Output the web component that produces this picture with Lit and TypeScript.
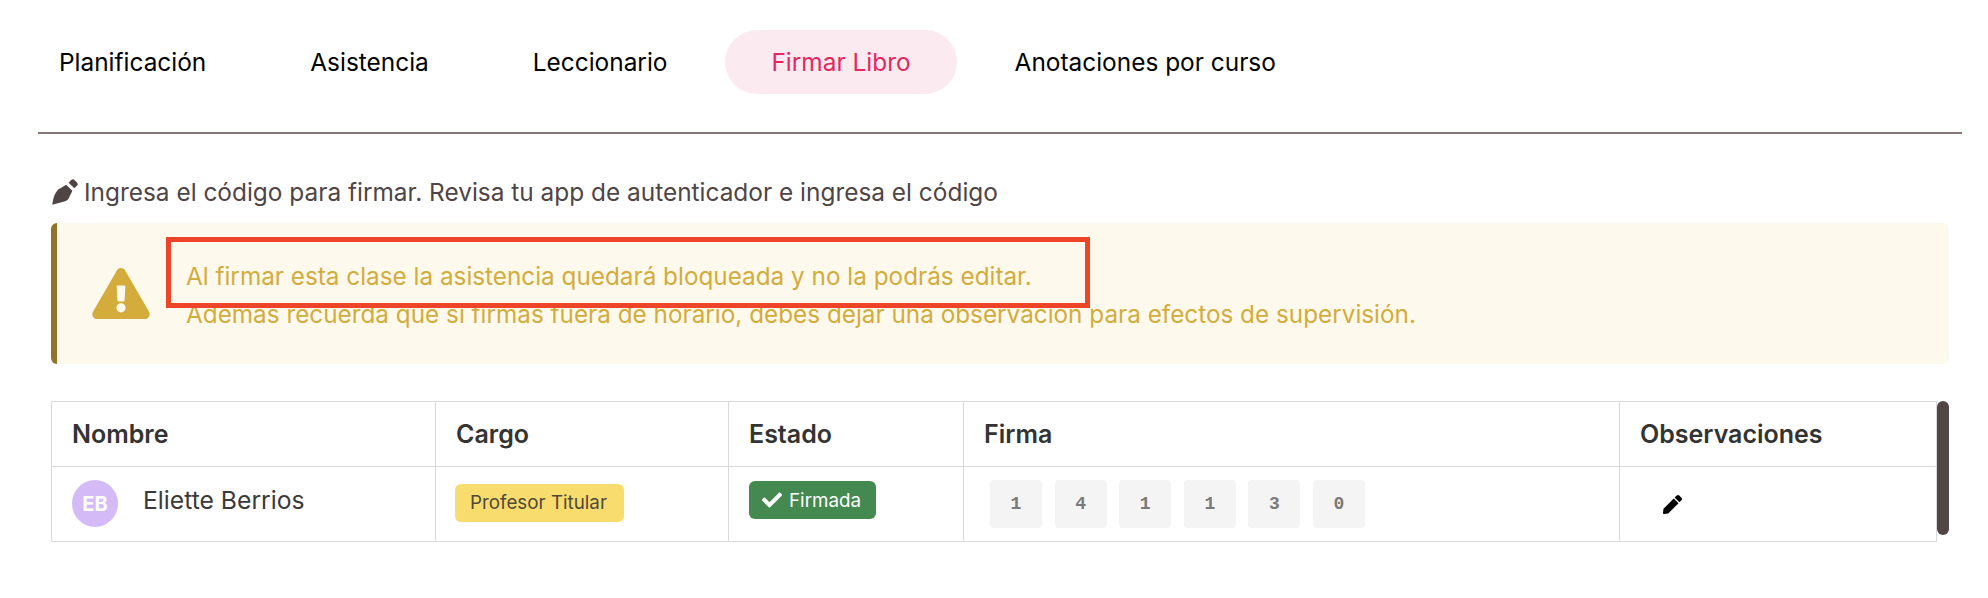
import { LitElement, html, css, svg } from 'lit';
import { customElement } from 'lit/decorators.js';

const TABS = ['Planificación', 'Asistencia', 'Leccionario', 'Firmar Libro', 'Anotaciones por curso'];
const CODE = ['1', '4', '1', '1', '3', '0'];

const penIcon = svg`<path d="M14.6 5.4 20.6 11.4 17.2 18.2C16.2 20 14.8 21 12.8 21.6L1.2 24.8C2 19 3.2 13.6 7.4 9.8Z"/><path d="M17 3.6 19.2 1.2A2.6 2.6 0 0 1 22.8 1.2L24.8 3.2A2.6 2.6 0 0 1 24.8 6.8L22.4 9Z"/>`;
const warnIcon = svg`<path d="M569.517 440.013C587.975 472.007 564.806 512 527.94 512H48.054c-36.937 0-59.999-40.055-41.577-71.987L246.423 23.985c18.467-32.009 64.72-31.951 83.154 0l239.94 416.028zM288 354c-25.405 0-46 20.595-46 46s20.595 46 46 46 46-20.595 46-46-20.595-46-46-46zm-43.673-165.346l7.418 136c.347 6.364 5.609 11.346 11.982 11.346h48.546c6.373 0 11.635-4.982 11.982-11.346l7.418-136c.375-6.874-5.098-12.654-11.982-12.654h-63.383c-6.884 0-12.356 5.78-11.981 12.654z"/>`;
const checkIcon = svg`<path d="M173.898 439.404l-166.4-166.4c-9.997-9.997-9.997-26.206 0-36.204l36.203-36.204c9.997-9.998 26.207-9.998 36.204 0L192 312.69 432.095 72.596c9.997-9.997 26.207-9.997 36.204 0l36.203 36.204c9.997 9.997 9.997 26.206 0 36.204l-294.4 294.401c-9.998 9.997-26.207 9.997-36.204-.001z"/>`;
const editIcon = svg`<path d="M290.74 93.24l128.02 128.02-277.99 277.99-114.14 12.6C11.35 513.54-1.56 500.62.14 485.34l12.7-114.22 277.9-278.88zm207.2-19.06l-60.11-60.11c-18.75-18.75-49.16-18.75-67.91 0l-56.55 56.55 128.02 128.02 56.55-56.55c18.75-18.76 18.75-49.16 0-67.91z"/>`;

@customElement('app-root')
export class AppRoot extends LitElement {
  static styles = css`
    :host {
      display: block;
      height: 598px;
      background: #fff;
      font-family: Inter, "Liberation Sans", sans-serif;
      font-size: 24.3px;
      color: #3a3a3a;
      overflow: hidden;
    }
    .tabs {
      display: flex;
      gap: 12px;
      padding: 30px 0 38px 13px;
      font-size: 24.42px;
    }
    .tab {
      height: 64px;
      padding: 0 46px;
      border-radius: 32px;
      display: flex;
      align-items: center;
      color: #000;
      white-space: nowrap;
    }
    .tab.active {
      background: #fbeaf0;
      color: #e5275f;
    }
    .rule {
      height: 2px;
      margin: 0 26px 0 38px;
      background: #857775;
    }
    .content {
      padding: 0 39px 0 51px;
    }
    .hint {
      display: flex;
      align-items: center;
      gap: 6px;
      height: 36px;
      margin-top: 40px;
      font-size: 24.42px;
      color: #4f4545;
    }
    .hint svg {
      width: 27px;
      height: 26px;
      fill: #4f4545;
      flex: none;
    }
    .alert {
      display: flex;
      align-items: center;
      gap: 36px;
      height: 141px;
      box-sizing: border-box;
      margin-top: 13px;
      padding-left: 35px;
      background: #fdf9ec;
      border-left: 6px solid #8f7428;
      border-radius: 6px;
      color: #d4ac3c;
      line-height: 38px;
      position: relative;
    }
    .alert svg {
      width: 58px;
      height: 51px;
      fill: #d4ac3c;
      flex: none;
    }
    .alert p {
      margin: 2px 0 0;
      white-space: nowrap;
    }
    .mark {
      position: absolute;
      left: 109px;
      top: 14px;
      width: 924px;
      height: 71px;
      box-sizing: border-box;
      border: 5px solid #ee4528;
    }
    .table-wrap {
      display: flex;
      align-items: flex-start;
      margin-top: 37px;
    }
    table {
      width: 1885px;
      table-layout: fixed;
      border-collapse: collapse;
      flex: none;
    }
    th, td {
      border: 1px solid #dadada;
      text-align: left;
      vertical-align: middle;
    }
    th {
      height: 64px;
      padding: 0 20px;
      font-size: 25px;
      font-weight: 600;
      color: #333;
    }
    td {
      height: 73px;
      padding: 0 20px 1px;
    }
    .scrollbar {
      width: 12px;
      height: 134px;
      border-radius: 6px;
      background: #524545;
      flex: none;
    }
    .person {
      display: flex;
      align-items: center;
      gap: 25px;
    }
    .person .name {
      margin-top: -8px;
      font-size: 24.7px;
    }
    .avatar {
      width: 46px;
      height: 47px;
      border-radius: 50%;
      background: #d4bbf8;
      color: #fff;
      font-size: 20px;
      font-weight: 700;
      display: flex;
      align-items: center;
      justify-content: center;
      flex: none;
    }
    .badge {
      display: inline-flex;
      align-items: center;
      height: 38px;
      padding: 0 16px;
      border-radius: 6px;
      font-size: 18.8px;
      white-space: nowrap;
      vertical-align: middle;
    }
    .role {
      background: #f9dc6e;
      color: #4f4a3a;
      padding: 0 17px 0 15px;
      margin: -2px 0 0 -1px;
    }
    .state {
      background: #448950;
      color: #fff;
      gap: 7px;
      padding: 0 15px 0 13px;
      margin-top: -10px;
    }
    .state svg {
      width: 20px;
      height: 20px;
      fill: #fff;
    }
    .code {
      display: flex;
      gap: 12.6px;
      padding-left: 6px;
    }
    .code span {
      width: 52px;
      height: 48px;
      border-radius: 4px;
      background: #f4f4f4;
      color: #7a7a7a;
      font-family: "Liberation Mono", monospace;
      font-size: 18px;
      font-weight: 700;
      display: flex;
      align-items: center;
      justify-content: center;
    }
    .edit {
      display: block;
      width: 19px;
      height: 19px;
      fill: #000;
      margin-left: 23px;
      margin-top: 1px;
    }
  `;

  render() {
    return html`
      <nav class="tabs">
        ${TABS.map((t) => html`<div class="tab ${t === 'Firmar Libro' ? 'active' : ''}">${t}</div>`)}
      </nav>
      <div class="rule"></div>
      <div class="content">
        <div class="hint">
          <svg viewBox="0 0 26 25">${penIcon}</svg>
          <span>Ingresa el código para firmar. Revisa tu app de autenticador e ingresa el código</span>
        </div>
        <div class="alert">
          <svg viewBox="0 0 576 512">${warnIcon}</svg>
          <p>
            Al firmar esta clase la asistencia quedará bloqueada y no la podrás editar.<br />
            Además recuerda que si firmas fuera de horario, debes dejar una observación para efectos de supervisión.
          </p>
          <div class="mark"></div>
        </div>
        <div class="table-wrap">
          <table>
            <colgroup>
              <col style="width:384px" />
              <col style="width:293px" />
              <col style="width:235px" />
              <col style="width:656px" />
              <col style="width:317px" />
            </colgroup>
            <thead>
              <tr>
                <th>Nombre</th>
                <th>Cargo</th>
                <th>Estado</th>
                <th>Firma</th>
                <th>Observaciones</th>
              </tr>
            </thead>
            <tbody>
              <tr>
                <td>
                  <div class="person">
                    <span class="avatar">EB</span>
                    <span class="name">Eliette Berrios</span>
                  </div>
                </td>
                <td><span class="badge role">Profesor Titular</span></td>
                <td><span class="badge state"><svg viewBox="0 0 512 512">${checkIcon}</svg>Firmada</span></td>
                <td>
                  <div class="code">${CODE.map((c) => html`<span>${c}</span>`)}</div>
                </td>
                <td><svg class="edit" viewBox="0 0 512 512">${editIcon}</svg></td>
              </tr>
            </tbody>
          </table>
          <div class="scrollbar"></div>
        </div>
      </div>
    `;
  }
}
